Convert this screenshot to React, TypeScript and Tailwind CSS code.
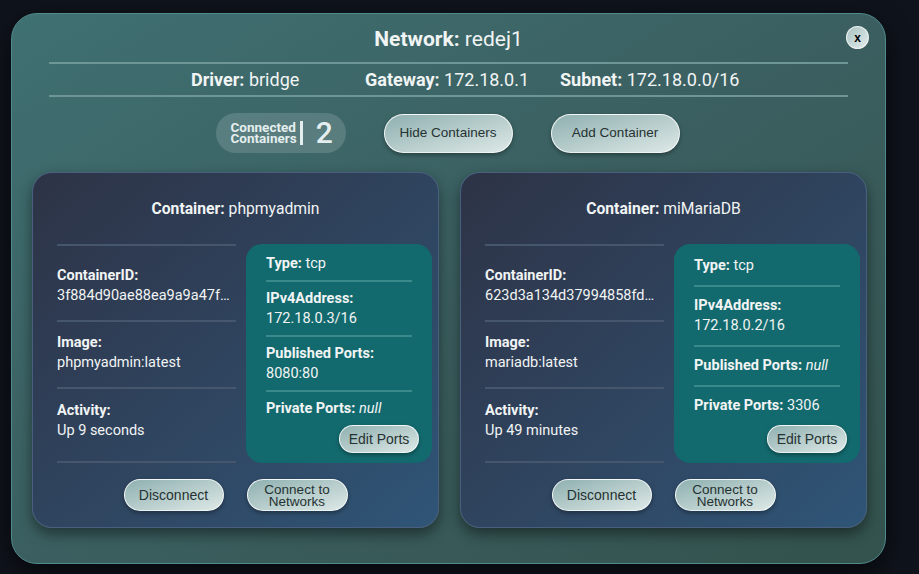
import React from "react";

type Port = { label: string; value: string; italic?: boolean; block?: boolean };

type ContainerInfo = {
  name: string;
  id: string;
  image: string;
  activity: string;
  ports: Port[];
};

const containers: ContainerInfo[] = [
  {
    name: "phpmyadmin",
    id: "3f884d90ae88ea9a9a47f…",
    image: "phpmyadmin:latest",
    activity: "Up 9 seconds",
    ports: [
      { label: "Type:", value: "tcp" },
      { label: "IPv4Address:", value: "172.18.0.3/16", block: true },
      { label: "Published Ports:", value: "8080:80", block: true },
      { label: "Private Ports:", value: "null", italic: true },
    ],
  },
  {
    name: "miMariaDB",
    id: "623d3a134d37994858fd…",
    image: "mariadb:latest",
    activity: "Up 49 minutes",
    ports: [
      { label: "Type:", value: "tcp" },
      { label: "IPv4Address:", value: "172.18.0.2/16", block: true },
      { label: "Published Ports:", value: "null", italic: true },
      { label: "Private Ports:", value: "3306" },
    ],
  },
];

const pill =
  "rounded-full border border-white/80 bg-gradient-to-br from-[#8fb0b0] to-[#dde9e7] text-[#263232] shadow-[0_2px_4px_rgba(0,0,0,0.35)] font-['Liberation_Sans',Arial,sans-serif]";

const ContainerCard = ({ c }: { c: ContainerInfo }) => {
  return (
    <div className="w-[407px] h-[356px] rounded-[20px] border border-[#4a5f80] bg-gradient-to-br from-[#2d3346] to-[#2f5577] shadow-[0_6px_14px_rgba(0,0,0,0.45)] flex flex-col">
      <div className="pt-[26px] text-center text-[15.7px] leading-5">
        <span className="font-bold">Container:</span> {c.name}
      </div>

      <div className="mt-[25px] flex pl-[24px] pr-[6px] gap-[10px]">
        <div className="w-[180px] flex flex-col text-[14.5px] leading-5">
          <div className="h-[78px] border-y-2 border-[#46566c] pt-[20px]">
            <div className="font-bold">ContainerID:</div>
            <div className="whitespace-nowrap overflow-hidden">{c.id}</div>
          </div>
          <div className="h-[67px] border-b-2 border-[#46566c] pt-[11px]">
            <div className="font-bold">Image:</div>
            <div>{c.image}</div>
          </div>
          <div className="h-[74px] border-b-2 border-[#46566c] pt-[12px]">
            <div className="font-bold">Activity:</div>
            <div>{c.activity}</div>
          </div>
        </div>

        <div className="w-[187px] h-[219px] rounded-[16px] bg-[#136a6e] flex flex-col pt-[3px] text-[14.5px] leading-5">
          {c.ports.map((p, i) => (
            <div
              key={i}
              className={
                "grow flex flex-col justify-center mx-[20px] " +
                (i < c.ports.length - 1 ? "border-b-2 border-[#3a8a8c]" : "")
              }
            >
              {p.block ? (
                <>
                  <div className="font-bold">{p.label}</div>
                  <div className={p.italic ? "italic" : ""}>{p.value}</div>
                </>
              ) : (
                <div>
                  <span className="font-bold">{p.label}</span>{" "}
                  <span className={p.italic ? "italic" : ""}>{p.value}</span>
                </div>
              )}
            </div>
          ))}
          <div className="flex justify-end pr-[13px] pb-[10px]">
            <button className={pill + " w-[80px] h-[28px] text-sm"}>Edit Ports</button>
          </div>
        </div>
      </div>

      <div className="mt-[16px] flex justify-center gap-[23px]">
        <button className={pill + " w-[100px] h-[32px] text-sm"}>Disconnect</button>
        <button className={pill + " w-[101px] h-[32px] text-[13.5px] leading-[12px] pt-[1px]"}>
          Connect to
          <br />
          Networks
        </button>
      </div>
    </div>
  );
};

export default function App() {
  return (
    <div className="w-[919px] h-[574px] bg-[#0f131b] pt-[13px] pl-[11px] overflow-hidden font-['Roboto',sans-serif] text-[#f1f4f4]">
      <div className="relative w-[875px] h-[551px] rounded-[26px] border border-[#4f8a8c] bg-gradient-to-br from-[#3f7072] via-[#3b5f60] to-[#33524d] shadow-[0_8px_24px_rgba(0,0,0,0.6)] flex flex-col items-center">
        <button className="absolute right-[16px] top-[12px] w-[23px] h-[23px] rounded-full border border-white/70 bg-gradient-to-br from-[#a9c2c2] to-[#e3ecec] text-black text-[12px] font-bold leading-none font-['Liberation_Sans',Arial,sans-serif]">
          x
        </button>

        <div className="pt-[11px] h-[48px] text-[21px] leading-[28px]">
          <span className="font-bold">Network:</span> redej1
        </div>

        <div className="w-[799px] h-[35px] border-y-2 border-[#6f9696] flex items-center pl-[142px] text-lg">
          <div className="w-[174px] whitespace-nowrap">
            <span className="font-bold">Driver:</span> bridge
          </div>
          <div className="w-[195px] whitespace-nowrap">
            <span className="font-bold">Gateway:</span> 172.18.0.1
          </div>
          <div className="whitespace-nowrap">
            <span className="font-bold">Subnet:</span> 172.18.0.0/16
          </div>
        </div>

        <div className="mt-[16px] flex items-center gap-[38px] pr-[2px]">
          <div className="w-[130px] h-[40px] rounded-full bg-white/15 flex items-center pl-[15px] pb-[1px]">
            <div className="text-[13.5px] leading-[11px] font-bold text-[#e4eeee]">
              Connected
              <br />
              Containers
            </div>
            <div className="ml-[3px] w-[3px] h-[24px] bg-[#e4eeee]" />
            <div className="ml-[13px] text-[30px] leading-none font-medium text-[#e4eeee]">2</div>
          </div>
          <button className={pill + " w-[129px] h-[39px] text-[13.5px]"}>Hide Containers</button>
          <button className={pill + " w-[129px] h-[39px] text-[13.5px]"}>Add Container</button>
        </div>

        <div className="mt-[19px] flex gap-[21px] pl-[2px]">
          {containers.map((c) => (
            <ContainerCard key={c.name} c={c} />
          ))}
        </div>
      </div>
    </div>
  );
}
